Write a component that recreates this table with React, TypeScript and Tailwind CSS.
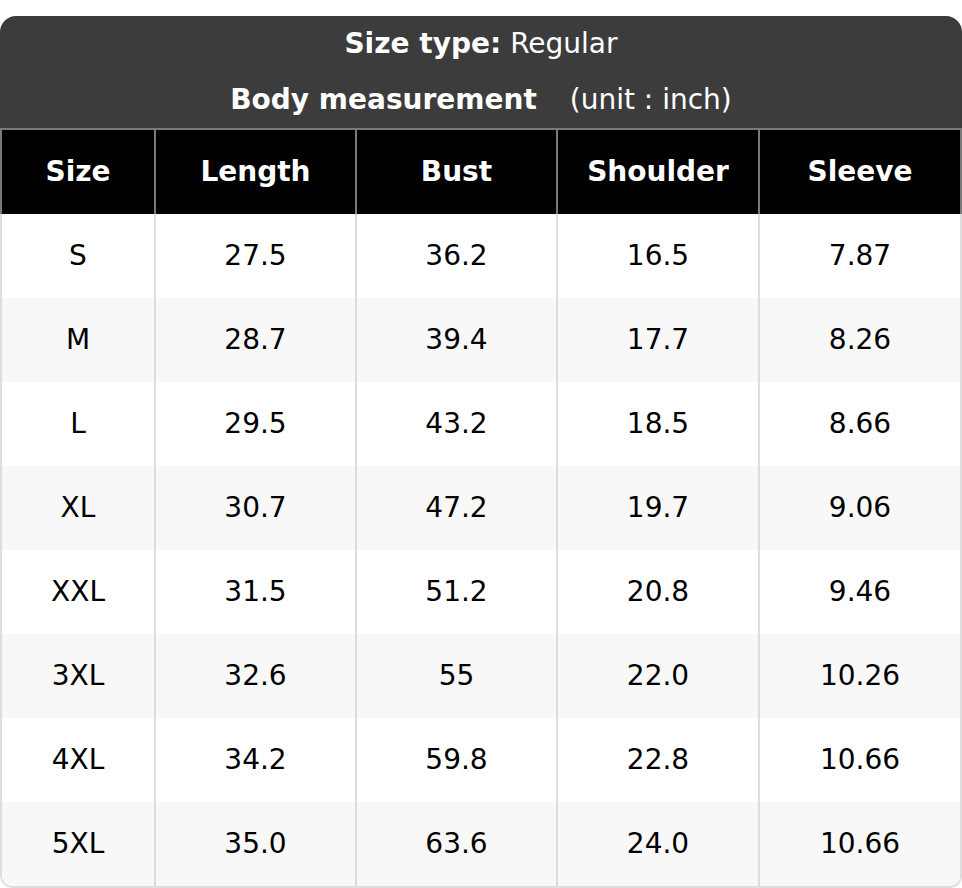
import React from 'react';

const columns = ['Size', 'Length', 'Bust', 'Shoulder', 'Sleeve'];

const rows: string[][] = [
  ['S', '27.5', '36.2', '16.5', '7.87'],
  ['M', '28.7', '39.4', '17.7', '8.26'],
  ['L', '29.5', '43.2', '18.5', '8.66'],
  ['XL', '30.7', '47.2', '19.7', '9.06'],
  ['XXL', '31.5', '51.2', '20.8', '9.46'],
  ['3XL', '32.6', '55', '22.0', '10.26'],
  ['4XL', '34.2', '59.8', '22.8', '10.66'],
  ['5XL', '35.0', '63.6', '24.0', '10.66'],
];

const gridCols = 'grid grid-cols-[152px_201px_201px_202px_1fr]';

export default function App() {
  return (
    <div className="bg-white pt-4 text-[28px]" style={{ fontFamily: '"DejaVu Sans", Verdana, sans-serif' }}>
      <div className="rounded-t-[16px] rounded-b-[12px] overflow-hidden">
        <div className="bg-[#3c3c3c] text-white text-center">
          <div className="h-[56px] flex items-center justify-center">
            <span className="font-bold">Size type:</span>
            <span className="ml-[9px]">Regular</span>
          </div>
          <div className="h-[56px] flex items-center justify-center">
            <span className="font-bold">Body measurement</span>
            <span className="ml-[33px]">(unit : inch)</span>
          </div>
        </div>

        <div className="border-t-2 border-[#7a7a7a]" />

        <div className={`${gridCols} bg-black text-white font-bold h-[84px] border-l-2 border-r-2 border-[#7a7a7a]`}>
          {columns.map((c, i) => (
            <div
              key={c}
              className={`flex items-center justify-center ${i > 0 ? 'border-l-2 border-[#7a7a7a]' : ''}`}
            >
              {c}
            </div>
          ))}
        </div>

        <div className="border-x-2 border-b-2 border-[#dddddd] rounded-b-[12px] overflow-hidden text-black">
          {rows.map((r, ri) => (
            <div key={r[0]} className={`${gridCols} h-[84px] ${ri % 2 === 1 ? 'bg-[#f8f8f8]' : 'bg-white'}`}>
              {r.map((v, i) => (
                <div
                  key={i}
                  className={`flex items-center justify-center ${i > 0 ? 'border-l-2 border-[#dddddd]' : ''}`}
                >
                  {v}
                </div>
              ))}
            </div>
          ))}
        </div>
      </div>
    </div>
  );
}
